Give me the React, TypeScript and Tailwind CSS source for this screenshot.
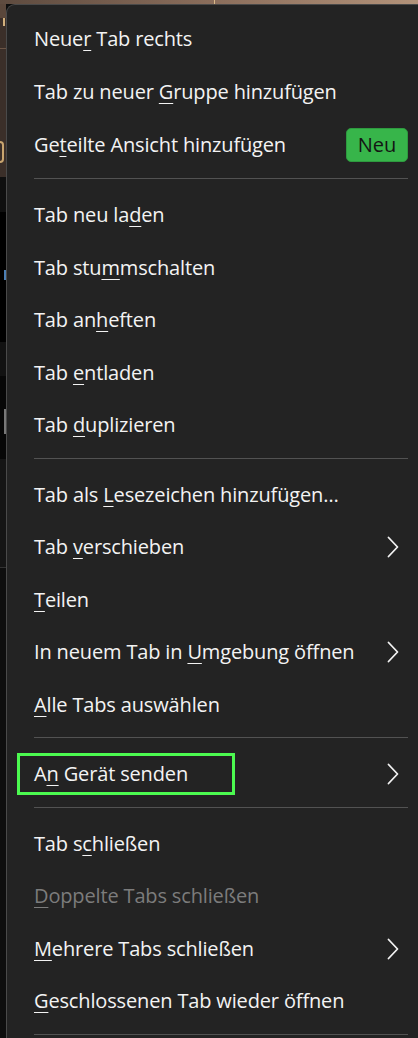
import React from "react";

type Item =
  | { kind: "sep" }
  | {
      kind: "item";
      pre: string;
      key: string;
      post: string;
      arrow?: boolean;
      badge?: string;
      disabled?: boolean;
      marked?: boolean;
    };

const item = (pre: string, key: string, post: string, extra: Partial<Item> = {}): Item =>
  ({ kind: "item", pre, key, post, ...extra } as Item);
const sep: Item = { kind: "sep" };

const menu: Item[] = [
  item("Neue", "r", " Tab rechts"),
  item("Tab zu neuer ", "G", "ruppe hinzufügen"),
  item("Ge", "t", "eilte Ansicht hinzufügen", { badge: "Neu" }),
  sep,
  item("Tab neu la", "d", "en"),
  item("Tab stu", "m", "mschalten"),
  item("Tab an", "h", "eften"),
  item("Tab ", "e", "ntladen"),
  item("Tab ", "d", "uplizieren"),
  sep,
  item("Tab als ", "L", "esezeichen hinzufügen…"),
  item("Tab ", "v", "erschieben", { arrow: true }),
  item("", "T", "eilen"),
  item("In neuem Tab in ", "U", "mgebung öffnen", { arrow: true }),
  item("", "A", "lle Tabs auswählen"),
  sep,
  item("A", "n", " Gerät senden", { arrow: true, marked: true }),
  sep,
  item("Tab s", "c", "hließen"),
  item("", "D", "oppelte Tabs schließen", { disabled: true }),
  item("", "M", "ehrere Tabs schließen", { arrow: true }),
  item("", "G", "eschlossenen Tab wieder öffnen"),
  sep,
];

function Chevron() {
  return (
    <svg width="12" height="22" viewBox="0 0 12 22" fill="none" className="shrink-0">
      <path d="M1.5 1.5 L10.5 11 L1.5 20.5" stroke="#f2f2f2" strokeWidth="1.8" strokeLinecap="round" strokeLinejoin="round" />
    </svg>
  );
}

export default function App() {
  return (
    <div
      className="w-[418px] h-[1038px] overflow-hidden flex flex-col bg-[#0d0d0d]"
      style={{ fontFamily: '"Open Sans", "Noto Sans", sans-serif' }}
    >
      {/* strip of the browser window behind the menu */}
      <div className="h-[4px] shrink-0 bg-gradient-to-r from-[#5e4b3f] via-[#8a6d5b] to-[#b3937a] flex">
        <div className="w-[214px]" />
        <div className="w-[1px] bg-[#d9b98a]" />
      </div>
      <div className="flex flex-1 min-h-0">
        <div className="w-[6px] shrink-0 flex flex-col">
          <div className="h-[173px] bg-[#3b2f29] flex flex-col">
            <div className="h-[14px] bg-[#5a473b]" />
            <div className="h-[8px] w-[2px] ml-[3px] bg-[#d2b07c]" />
            <div className="h-[22px]" />
            <div className="h-[1px] bg-[#6b5546]" />
            <div className="h-[92px]" />
            <div className="h-[22px] w-[4px] rounded-r-full border-2 border-l-0 border-[#c9a56f]" />
          </div>
          <div className="h-[35px] bg-[#0f0f0f]" />
          <div className="h-[130px] bg-[#000000] flex flex-col">
            <div className="h-[58px]" />
            <div className="h-[10px] w-[2px] ml-[4px] bg-[#4b7fb5]" />
          </div>
          <div className="h-[34px] bg-[#121212]" />
          <div className="h-[83px] bg-[#070707] flex flex-col">
            <div className="h-[33px]" />
            <div className="h-[25px] w-[2px] ml-[4px] bg-[#777777]" />
          </div>
          <div className="h-[108px] bg-[#151515]" />
          <div className="h-[1px] bg-[#333333]" />
          <div className="flex-1 bg-[#0e0e0e]" />
        </div>

        <div className="flex-1 bg-[#232323] rounded-tl-[9px] border-l border-t border-[#4a4a4a] pt-[8px] pr-[10px] text-[#f3f3f3]">
          {menu.map((m, i) =>
            m.kind === "sep" ? (
              <div key={i} className="pt-[6px] pb-[10px] pl-[27px]">
                <div className="h-[1px] bg-[#525252]" />
              </div>
            ) : (
              <div
                key={i}
                className={`relative flex items-center pl-[27px] pr-[9px] ${m.badge ? "h-[54px]" : "h-[52.5px]"} ${
                  m.disabled ? "text-[#7c7c7c]" : ""
                }`}
              >
                {m.marked && (
                  <div className="absolute left-[10px] top-[5px] w-[218px] h-[42px] border-[3px] border-[#4cfa50]" />
                )}
                <span className="flex-1 text-[20px] leading-[28px] tracking-[-0.15px] whitespace-nowrap">
                  {m.pre}
                  <span className="underline decoration-1 underline-offset-[4px]">{m.key}</span>
                  {m.post}
                </span>
                {m.badge && (
                  <span className="mr-[-9px] w-[62px] h-[34px] rounded-[5px] bg-[#37b54a] border border-[#2e9a3f] flex items-center justify-center text-[20px] text-[#141414]">
                    {m.badge}
                  </span>
                )}
                {m.arrow && <Chevron />}
              </div>
            )
          )}
        </div>
      </div>
    </div>
  );
}
